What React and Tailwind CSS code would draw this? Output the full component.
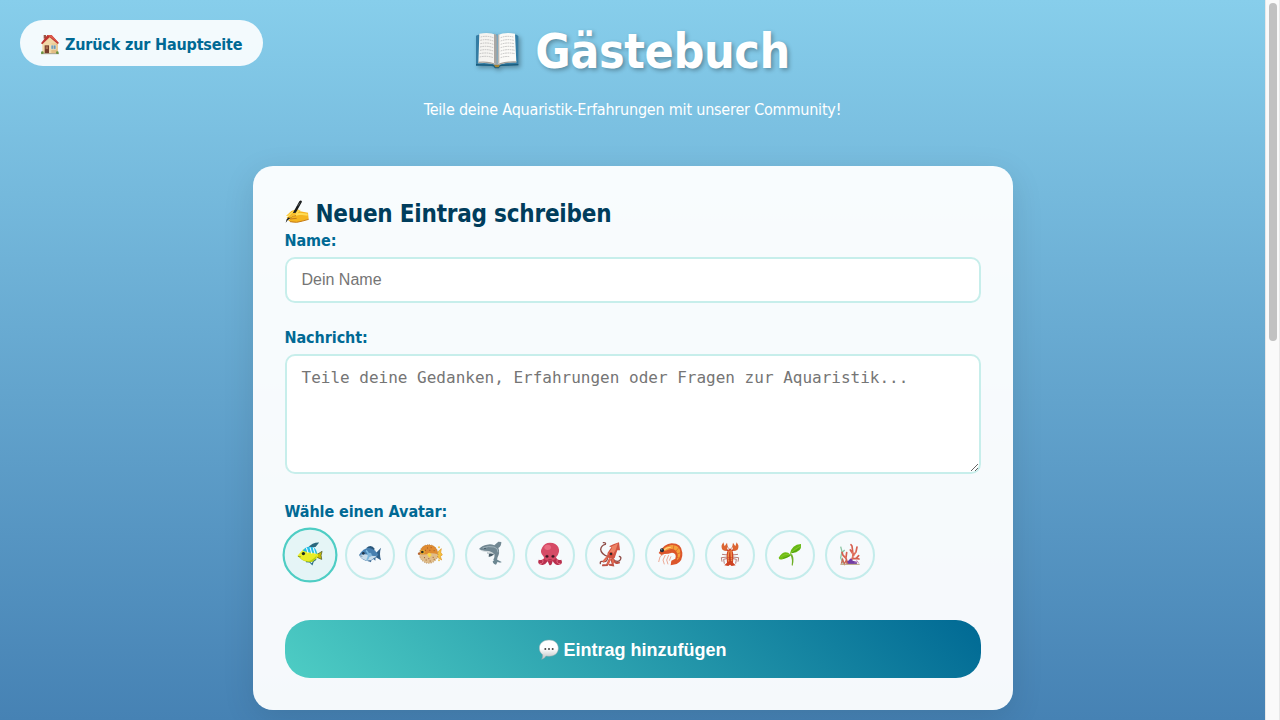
import { useState } from "react";

function TropicalFish() {
  return (
    <g>
      <path d="M-6-20Q7-35 25-34L15-22Z" fill="#29677d" />
      <path d="M18-1L33-10Q28 1 32 12L18 6Z" fill="#c9bd00" stroke="#4d592c" strokeWidth="2" />
      <path d="M-34 2Q-15-23 1-21Q18-17 22 2Q14 23-5 19Q-23 15-34 2Z" fill="#e8ed27" />
      <path d="M-20-12Q-11-25 3-22L12-20Q18-15 20-3L8-6L-2-7L-15-10Z" fill="#25bde9" />
      <path d="M-10-20L-5-5M0-21L5-4M9-19L14-3" stroke="#e8fbff" strokeWidth="3" fill="none" />
      <path d="M-11 18L-1 19L6 26L9 17L17 12" fill="none" stroke="#286e86" strokeWidth="3" />
      <path d="M-31 5Q-13 22 3 14Q14 8 19 1Q15 18 1 20Q-20 19-31 5Z" fill="#b7cf18" />
      <circle cx="-18" cy="-4" r="4.5" fill="#172820" />
      <path d="M-33 4L-25 5" stroke="#648021" strokeWidth="2" />
    </g>
  );
}

function Fish() {
  return (
    <g>
      <path d="M-12-20Q3-34 14-19L11-11Z" fill="#29577b" />
      <path d="M16-4L33-22Q27-4 33 16L15 5Z" fill="#315f88" />
      <path d="M-33 0Q-19-23-1-21Q15-17 25-1Q12 15-4 19Q-23 18-33 0Z" fill="#477fb0" />
      <path d="M-32 1Q-17-5-1 1Q10 5 20 2Q6 18-9 17Q-25 14-32 1Z" fill="#c9dcea" />
      <path d="M-12-14Q2-1-9 15" fill="none" stroke="#7cb9df" strokeWidth="5" />
      <path d="M-7-2Q4-13 6 3L-3 7Z" fill="#83b6dc" />
      <path d="M-8 17L3 22L4 16M9 11L16 17L17 7" fill="#426f9a" />
      <circle cx="-20" cy="-5" r="4" fill="#20364b" />
      <path d="M-31 2L-23 4" stroke="#496d88" strokeWidth="2" />
    </g>
  );
}

function Puffer() {
  return (
    <g>
      <path d="M22-8L34-19L32-8L37 0L31 4L35 15L21 6Z" fill="#f4c33e" stroke="#df9325" strokeWidth="2" />
      <circle cx="-4" cy="-3" r="28" fill="#dfbd8b" />
      <path d="M-31-3Q-29-31-3-31Q22-30 24-2Q9-7 0-5Q-16 1-31-3Z" fill="#df8b31" />
      <circle cx="-4" cy="-3" r="28" fill="none" stroke="#a9763f" strokeWidth="3" strokeDasharray="2 5" />
      <path d="M-9-21h3m8-1h3m-20 8h3m10 0h3m10 1h3M-13 15h3m9 3h3m9-5h3M-18 8h3m10 3h3m10-4h3" stroke="#9f592a" strokeWidth="3" />
      <path d="M-9-2Q-2-13 5 0L-2 8Z" fill="#f8d846" />
      <circle cx="-22" cy="-9" r="6" fill="#e9be34" /><circle cx="-23" cy="-9" r="4" fill="#302c24" />
      <circle cx="-33" cy="-4" r="3.5" fill="#b96531" />
      <circle cx="27" cy="-23" r="3" fill="#efc44b" /><circle cx="27" cy="16" r="3" fill="#efc44b" />
    </g>
  );
}

function Dolphin() {
  return (
    <g>
      <path d="M-33-17Q-22-29-9-30Q3-33 13-28L25-39L34-38Q34-25 25-20Q31-7 22 10Q23 17 14 20L10 15Q15 6 13-1Q3 2-7-3L-10-10Q-23-9-33-17Z" fill="#718792" transform="translate(0 -1)" />
      <path d="M-31-16Q-15-12-3-12Q9-9 15 1Q-2 2-10-9Q-22-9-31-16Z" fill="#d3dadd" />
      <path d="M16 8L22 14L35 21Q31 25 23 20L18 29Q9 28 8 19L13 16Z" fill="#6c8792" />
      <path d="M-3-4Q4-5 12-2Q4 7-4 5Z" fill="#485d69" />
      <path d="M-22-21Q-5-28 12-24Q24-22 24-8" fill="none" stroke="#a1b3bb" strokeWidth="3" />
      <circle cx="-15" cy="-20" r="2" fill="#263f4b" />
    </g>
  );
}

function Octopus() {
  return (
    <g>
      <path d="M-16 4Q-18 18-34 14Q-39 28-26 29Q-16 33-7 19L-2 30Q5 34 8 18Q17 33 27 29Q40 28 34 14Q20 18 17 3" fill="#b92f4e" />
      <path d="M-19 5Q-33-7-23-23Q-17-37 0-37Q19-37 25-23Q32-7 18 7Q16 18 0 17Q-17 18-19 5Z" fill="#d64b66" />
      <ellipse cx="-7" cy="-23" rx="10" ry="8" fill="#ed7589" opacity=".75" />
      <path d="M-22 13Q-18 27-31 26M22 13Q18 27 31 26" fill="none" stroke="#e77087" strokeWidth="3" />
      <circle cx="-9" cy="4" r="5" fill="#742a3c" /><circle cx="9" cy="4" r="5" fill="#742a3c" />
      <circle cx="-9" cy="4" r="2.5" fill="#210f18" /><circle cx="9" cy="4" r="2.5" fill="#210f18" />
      <path d="M-5 14H5" stroke="#912541" strokeWidth="2" />
    </g>
  );
}

function Squid() {
  return (
    <g>
      <path d="M-6 5Q-27-3-28-17Q-26-29-14-32Q-11-38-20-37M7 12Q20 23 29 17Q37 7 28 4M-7 6Q-7 21-19 20Q-31 17-29 26" fill="none" stroke="#8e4c47" strokeWidth="4" strokeLinecap="round" />
      <path d="M-1 13L-9 30L-21 31M5 14L9 31L-1 29M9 12Q16 28 27 23" fill="none" stroke="#bd5145" strokeWidth="6" strokeLinecap="round" />
      <path d="M27-38L30-14L22-14L14 9Q2 15-9 5L-7-7L4-23L-3-26Q12-34 27-38Z" fill="#d25543" />
      <path d="M24-35L17-15L6 2Q-5 2-5-4L6-21L3-25Z" fill="#ed8365" />
      <path d="M-8 6L-21 21M1 11L-7 28M8 12L10 25" stroke="#e36951" strokeWidth="6" />
      <circle cx="3" cy="-3" r="6" fill="#cb4035" /><circle cx="3" cy="-3" r="3.5" fill="#292b2b" />
    </g>
  );
}

function Shrimp() {
  return (
    <g>
      <path d="M-18-4L-30 5L-34 21M-14 0L-21 15L-17 28M-4 0L-10 15L-6 28M3 4L-2 17" fill="none" stroke="#edaa97" strokeWidth="3" />
      <path d="M-34-6Q-17-34 5-35Q35-35 37-7Q39 17 20 27L2 31L4 17L16 11Q21-6 6-7Q-4-3-18-3L-26 0Z" fill="#dc562b" />
      <path d="M-23-16Q-2-33 13-29Q32-24 31-6Q32 9 20 16Q28-2 16-14Q5-22-13-13Z" fill="#f5a03b" />
      <path d="M-4-29L3-12M12-31L9-14M27-23L17-10M34-8L21-3M31 11L19 6" stroke="#d66026" strokeWidth="2" />
      <path d="M-18-15Q-6-25 2-22" stroke="#ffd27d" strokeWidth="4" fill="none" />
      <circle cx="-24" cy="-14" r="6" fill="#202c36" /><circle cx="-25" cy="-16" r="2" fill="#77919c" />
    </g>
  );
}

function Lobster() {
  return (
    <g>
      <path d="M-6 0L-24-2M-6 6L-26 8L-24 20M-6 10L-19 13L-17 26M6 0L24-2M6 6L26 8L24 20M6 10L19 13L17 26" fill="none" stroke="#ae6860" strokeWidth="2.5" />
      <path d="M-4-13L-17-18L-20-25M4-13L17-18L20-25" fill="none" stroke="#c94524" strokeWidth="5" />
      <path d="M-3-18L-9-28M3-18L9-28" fill="none" stroke="#c47866" strokeWidth="2" />
      <path d="M-20-38L-16-26L-9-37Q-4-18-14-12Q-28-14-25-29ZM20-38L16-26L9-37Q4-18 14-12Q28-14 25-29Z" fill="#dc6532" />
      <path d="M0-20Q12-11 10 7L9 23L17 31L5 33L0 29L-5 33L-17 31L-9 23L-10 7Q-12-11 0-20Z" fill="#cf4222" />
      <path d="M-2-13Q-7 0-4 21M3-14L5 19" stroke="#f1904c" strokeWidth="4" />
      <path d="M-8 8H8M-8 14H8M-7 20H7" stroke="#b83824" strokeWidth="1.5" />
    </g>
  );
}

function Seedling() {
  return (
    <g>
      <path d="M6-3Q14 12 8 32L5 31Q8 12 1-1Z" fill="#6eaf25" />
      <path d="M0-4Q5-31 33-33Q37-8 5-5Z" fill="#67b914" />
      <path d="M2-1Q-17-19-34 8Q-33 17-20 12Q-3 8 2-1Z" fill="#70bd13" />
      <path d="M1-4Q16-20 30-26M3-1Q-17-5-28 7" fill="none" stroke="#85c72c" strokeWidth="3" />
      <path d="M6-7Q21-12 28-20M2 1Q-10 7-21 10" fill="none" stroke="#43940e" strokeWidth="2" />
    </g>
  );
}

function Coral() {
  return (
    <g>
      <path d="M-28-25L-24-10L-28 8L-20 26M-24-7L-16-15" fill="none" stroke="#8bc6a4" strokeWidth="4" />
      <path d="M-7 25L-12 10L-21 1L-24-8M-12 8L-10-7M1 22L8 8L9-3L1-15M9-3L6-27L3-31M9 2L18-9L21-24M7 11L18 11L26 2M17 10L27 12" fill="none" stroke="#d66050" strokeWidth="5" strokeLinecap="round" />
      <path d="M-10 10L-17 1M4 15L9 1L6-10M12 4L18-12" fill="none" stroke="#ed8a71" strokeWidth="2" />
      <path d="M-11 27Q-9 17-3 16Q2 5 8 17L20 20L21 28Z" fill="#713ca6" />
      <path d="M-26 26L-22 13L-17 27L-12 17L-7 27" fill="none" stroke="#cb6653" strokeWidth="4" />
      <path d="M14 23L21 17L26 25" fill="none" stroke="#c485b6" strokeWidth="3" />
      <path d="M-29 28H29" stroke="#b7a37b" strokeWidth="3" />
    </g>
  );
}

const avatars = [
  ["Skalar", TropicalFish],
  ["Fisch", Fish],
  ["Kugelfisch", Puffer],
  ["Delfin", Dolphin],
  ["Oktopus", Octopus],
  ["Tintenfisch", Squid],
  ["Garnele", Shrimp],
  ["Hummer", Lobster],
  ["Pflanze", Seedling],
  ["Koralle", Coral],
];

function House() {
  return (
    <svg viewBox="0 0 60 63" className="mt-0.5 h-[21px] w-5 shrink-0" aria-hidden="true">
      <path d="M11 3H18V14H11Z" fill="#985745" />
      <path d="M7 28L29 8L53 28V57H7Z" fill="#f1d7a6" />
      <path d="M34 29H53V57H34Z" fill="#e3bd83" />
      <path d="M3 28L22 3H35L57 27L53 30L29 10L7 31Z" fill="#bd3430" />
      <path d="M22 4H35L55 26L31 9Z" fill="#e05d4d" />
      <path d="M14 34H27V58H14Z" fill="#773e2c" /><path d="M17 37H24V45H17Z" fill="#a96f4d" />
      <path d="M33 33H48V46H33Z" fill="#6596bc" stroke="#fff0c5" strokeWidth="2" /><path d="M40 33V46" stroke="#f7dfab" strokeWidth="2" />
      <path d="M3 59H57" stroke="#a79c84" strokeWidth="3" />
      <circle cx="7" cy="56" r="4" fill="#67933e" /><circle cx="52" cy="56" r="4" fill="#67933e" />
    </svg>
  );
}

function Book() {
  return (
    <svg viewBox="0 0 132 108" className="mb-1 h-9 w-11 shrink-0 overflow-visible [filter:drop-shadow(2px_2px_2px_rgba(0,0,0,0.3))]" aria-hidden="true">
      <path d="M3 11L10 8H124L130 12V100L78 102L70 107H59L50 102H3Z" fill="#347da4" />
      <path d="M3 98L57 100L61 107H70L75 100L130 98" fill="none" stroke="#195b7a" strokeWidth="4" />
      <path d="M13 5Q43-1 64 9V98Q39 91 10 94Z" fill="#f5f4f1" />
      <path d="M68 9Q91-1 120 5L124 91Q94 90 68 99Z" fill="#fbfaf7" />
      <path d="M10 91Q44 88 65 99Q92 88 124 90" fill="none" stroke="#a5a19a" strokeWidth="4" />
      <path d="M57 6Q65 6 65 15V98Q58 93 57 93Z" fill="#aaa6a2" />
      <path d="M69 10L73 6V92L68 98Z" fill="#bcb8b3" />
      <path d="M17 15Q36 10 55 17M16 25Q36 20 55 27M16 35Q36 30 55 37M15 45Q36 40 55 47M15 55Q36 50 55 57M14 65Q36 60 55 67M14 75Q36 70 55 77M77 17Q94 10 115 15M77 27Q96 20 117 25M77 37Q96 30 118 35M77 47Q96 40 119 45M77 57Q96 50 120 55M77 67Q96 60 120 65M77 77Q90 72 104 74" fill="none" stroke="#aaa" strokeWidth="2" strokeDasharray="5 2" />
      <path d="M57 99H75L71 106H61Z" fill="#a38334" />
    </svg>
  );
}

function WritingHand() {
  return (
    <svg viewBox="0 0 72 72" className="mb-0.5 h-6 w-6 shrink-0" aria-hidden="true">
      <path d="M3 48L19 33L30 29Q40 25 45 34L69 38L71 58L53 63Q36 70 15 65L9 60L18 56L8 57L5 52L19 46Z" fill="#f5b51f" />
      <path d="M8 49L23 37L39 34L28 45L46 41L68 44" fill="none" stroke="#ffdc55" strokeWidth="6" />
      <path d="M20 49L33 47M15 57L35 55M15 65Q36 70 53 63L71 58" fill="none" stroke="#c57b19" strokeWidth="3" />
      <path d="M2 68L5 58L22 42L43 4Q48-1 51 5L29 44L8 61Z" fill="#171a1b" />
      <path d="M38 18L45 8" stroke="#737a7b" strokeWidth="2" />
      <path d="M11 50L22 39L35 38L30 46L14 55Z" fill="#f8bd2c" />
    </svg>
  );
}

function SpeechBubble() {
  return (
    <svg viewBox="0 0 60 63" className="h-[21px] w-5 shrink-0" aria-hidden="true">
      <defs><linearGradient id="bubble" x2="0" y2="1"><stop offset=".45" stopColor="#fff" /><stop offset="1" stopColor="#b8bec0" /></linearGradient></defs>
      <path d="M30 3C47 3 58 13 58 28C58 43 46 52 30 52L21 51Q17 59 8 61Q12 55 11 47C4 42 1 36 1 27C1 13 13 3 30 3Z" fill="url(#bubble)" stroke="#9aabad" strokeWidth="1.5" />
      <g fill="#444"><circle cx="19" cy="30" r="3" /><circle cx="30" cy="30" r="3" /><circle cx="41" cy="30" r="3" /></g>
    </svg>
  );
}

export default function App() {
  const [selected, setSelected] = useState(0);
  return (
    <div className="flex h-[720px] w-[1280px] overflow-hidden font-['DejaVu_Sans_Condensed','DejaVu_Sans',sans-serif] leading-[26px]">
      <main className="relative w-[1265px] bg-linear-to-b from-[#87ceeb] to-[#4682b4]">
        <a href="#" className="absolute top-5 left-5 flex h-[46px] w-[243px] items-center gap-[5px] rounded-[25px] bg-white/90 pl-5 font-bold tracking-[-0.17px] whitespace-nowrap text-[#006994]">
          <House /><span className="pt-[3px]">Zurück zur Hauptseite</span>
        </a>
        <header className="pt-[13px] text-center text-white">
          <h1 className="flex h-[77px] items-center justify-center gap-4 text-[48px] leading-[77px] font-bold tracking-[-0.4px] [text-shadow:2px_2px_4px_rgba(0,0,0,0.3)]">
            <Book /><span>Gästebuch</span>
          </h1>
          <p className="mt-[7px] tracking-[-0.2px]">Teile deine Aquaristik-Erfahrungen mit unserer Community!</p>
        </header>
        <form className="mx-auto mt-[43px] h-[544px] w-[760px] rounded-[20px] bg-white/95 p-8 shadow-[0_8px_32px_rgba(0,0,0,0.1)]" onSubmit={(e) => e.preventDefault()}>
          <h2 className="flex h-[29px] items-center gap-[7px] text-2xl leading-[29px] font-bold tracking-[-0.22px] text-[#003d5c]">
            <WritingHand /><span className="pt-1">Neuen Eintrag schreiben</span>
          </h2>
          <label htmlFor="name" className="mb-[3px] block pt-px font-bold tracking-[-0.07px] text-[#006994]">Name:</label>
          <input id="name" className="block h-[46px] w-full rounded-[10px] border-2 border-[#c7eeeb] bg-white px-[15px] font-['Liberation_Sans',sans-serif] text-base placeholder:text-[#757575]" placeholder="Dein Name" />
          <label htmlFor="message" className="mt-[22px] mb-[3px] block font-bold tracking-[-0.07px] text-[#006994]">Nachricht:</label>
          <textarea id="message" className="block h-[120px] w-full resize-y rounded-[10px] border-2 border-[#c7eeeb] bg-white px-[15px] py-3 font-['DejaVu_Sans_Mono',monospace] text-base leading-[19px] placeholder:text-[#757575]" placeholder="Teile deine Gedanken, Erfahrungen oder Fragen zur Aquaristik..." />
          <p className="mt-[25px] mb-[5px] font-bold tracking-[-0.07px] text-[#006994]">Wähle einen Avatar:</p>
          <div className="flex gap-2.5">
            {avatars.map(([name, Drawing], i) => (
              <button key={name} type="button" aria-label={name} onClick={() => setSelected(i)} className={`flex h-[50px] w-[50px] items-center justify-center rounded-full border-2 ${selected === i ? "scale-110 border-[#4ecdc4] bg-[#4ecdc4]/10" : "border-[#4ecdc4]/30"}`}>
                <svg viewBox="-45 -45 90 90" className="h-[30px] w-[30px]" aria-hidden="true"><Drawing /></svg>
              </button>
            ))}
          </div>
          <button className="mt-10 flex h-[58px] w-full items-center justify-center gap-[5px] rounded-[25px] bg-[linear-gradient(45deg,#4ecdc4,#006994)] font-['Liberation_Sans',sans-serif] text-lg font-bold text-white">
            <SpeechBubble /><span className="pt-0.5">Eintrag hinzufügen</span>
          </button>
        </form>
      </main>
      <div className="flex w-[15px] justify-center border-x border-[#e8e8e8] bg-[#fafafa] pt-[3px]" aria-hidden="true">
        <div className="h-[338px] w-2 rounded-full bg-[#c1c1c1]" />
      </div>
    </div>
  );
}
